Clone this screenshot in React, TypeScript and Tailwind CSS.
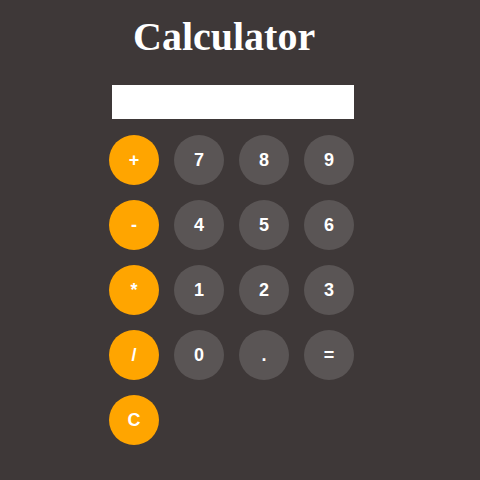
const rows = [
  ["+", "7", "8", "9"],
  ["-", "4", "5", "6"],
  ["*", "1", "2", "3"],
  ["/", "0", ".", "="],
  ["C"],
];

function Key({ label, op }: { label: string; op: boolean }) {
  return (
    <button
      className={
        "w-[50px] h-[50px] rounded-full text-white font-bold text-[18px] flex items-center justify-center font-['Liberation_Sans',Arial,sans-serif] " +
        (op ? "bg-[#ffa500]" : "bg-[#5a5555]")
      }
    >
      {label}
    </button>
  );
}

export default function App() {
  return (
    <div className="w-full min-h-[480px] bg-[#3e3838] pl-[109px]">
      <h1 className="pt-[14px] pl-[24px] text-white font-bold text-[40px] leading-[46px] font-['Liberation_Serif','Times_New_Roman',serif]">
        Calculator
      </h1>
      <div className="mt-[25px] ml-[3px] w-[242px] h-[34px] bg-white" />
      <div className="mt-[16px] flex flex-col gap-[15px] w-[245px]">
        {rows.map((row, i) => (
          <div key={i} className="flex gap-[15px]">
            {row.map((k, j) => (
              <Key key={k} label={k} op={j === 0} />
            ))}
          </div>
        ))}
      </div>
    </div>
  );
}
